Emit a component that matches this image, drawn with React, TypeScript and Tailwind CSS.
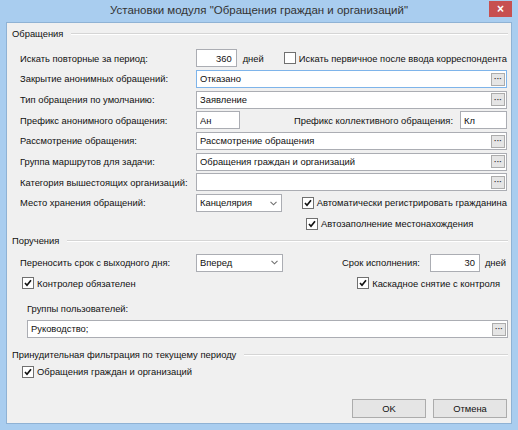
import React from "react";

const font = { fontFamily: '"Liberation Sans", Arial, sans-serif' };

function Dots() {
  return (
    <span className="flex h-[13px] w-[14px] items-center justify-center border border-[#acacac] bg-[#e5e5e5] text-[8px] font-bold leading-none text-[#333]">
      ···
    </span>
  );
}

function TextBox({
  value = "",
  className = "",
  right = false,
  dots = false,
  focused = false,
}: {
  value?: string;
  className?: string;
  right?: boolean;
  dots?: boolean;
  focused?: boolean;
}) {
  return (
    <div
      className={`flex h-[18px] items-center border bg-white pl-[3px] pr-[1px] ${
        focused ? "border-[#7eb4ea]" : "border-[#abadb3]"
      } ${className}`}
    >
      <span className={`flex-1 truncate ${right ? "pr-[3px] text-right" : ""}`}>{value}</span>
      {dots && <Dots />}
    </div>
  );
}

function Combo({ value, className = "" }: { value: string; className?: string }) {
  return (
    <div className={`flex h-[18px] items-center border border-[#abadb3] bg-white pl-[3px] pr-[4px] ${className}`}>
      <span className="flex-1">{value}</span>
      <svg width="7" height="5" viewBox="0 0 7 5">
        <path d="M0.5 0.8 L3.5 3.8 L6.5 0.8" fill="none" stroke="#707070" strokeWidth="1.1" />
      </svg>
    </div>
  );
}

function Check({ label, checked = false, className = "" }: { label: string; checked?: boolean; className?: string }) {
  return (
    <div className={`flex items-center gap-[3px] ${className}`}>
      <span className="flex h-[12px] w-[12px] items-center justify-center border border-[#707070] bg-white">
        {checked && (
          <svg width="8" height="8" viewBox="0 0 8 8">
            <path d="M1 4 L3 6.2 L7 1.3" fill="none" stroke="#111" strokeWidth="1.7" />
          </svg>
        )}
      </span>
      <span>{label}</span>
    </div>
  );
}

function Header({ title, className = "" }: { title: string; className?: string }) {
  return (
    <div className={`flex h-[16px] items-center gap-[8px] ${className}`}>
      <span>{title}</span>
      <div className="flex-1 border-t border-b border-t-[#d5d5d5] border-b-white" />
    </div>
  );
}

function Row({ label, children }: { label: string; children: React.ReactNode }) {
  return (
    <div className="flex h-[20.7px] items-center pl-[8px]">
      <span className="w-[176px] shrink-0 whitespace-nowrap">{label}</span>
      {children}
    </div>
  );
}

export default function App() {
  return (
    <div
      className="relative flex h-[430px] w-[518px] flex-col bg-[#a9cdef] text-[9.4px] leading-none text-[#111]"
      style={font}
    >
      <div className="flex h-[22px] items-center justify-center pb-[1px] text-[11.5px] text-[#333]">
        Установки модуля "Обращения граждан и организаций"
      </div>
      <div className="absolute right-[6px] top-[1px] flex h-[16px] w-[23px] items-center justify-center bg-[#c75050] text-[12px] font-bold text-white">
        ×
      </div>

      <div className="mx-[6px] flex h-[402px] flex-col border border-[#8fb2d4] bg-[#f0f0f0] pl-[5px] pr-[3px] whitespace-nowrap">
        <Header title="Обращения" className="mt-[3px]" />

        <div className="mt-[6px] flex flex-col pr-[1px]">
          <Row label="Искать повторные за период:">
            <TextBox value="360" right className="w-[50px]" />
            <span className="ml-[6px]">дней</span>
            <Check label="Искать первичное после ввода корреспондента" className="ml-[20px]" />
          </Row>
          <Row label="Закрытие анонимных обращений:">
            <TextBox value="Отказано" dots focused className="flex-1" />
          </Row>
          <Row label="Тип обращения по умолчанию:">
            <TextBox value="Заявление" dots className="flex-1" />
          </Row>
          <Row label="Префикс анонимного обращения:">
            <TextBox value="Ан" className="w-[44px]" />
            <span className="ml-auto mr-[7px]">Префикс коллективного обращения:</span>
            <TextBox value="Кл" className="w-[47px]" />
          </Row>
          <Row label="Рассмотрение обращения:">
            <TextBox value="Рассмотрение обращения" dots className="flex-1" />
          </Row>
          <Row label="Группа маршрутов для задачи:">
            <TextBox value="Обращения граждан и организаций" dots className="flex-1" />
          </Row>
          <Row label="Категория вышестоящих организаций:">
            <TextBox dots className="flex-1" />
          </Row>
          <Row label="Место хранения обращений:">
            <Combo value="Канцелярия" className="w-[96px]" />
            <Check label="Автоматически регистрировать гражданина" checked className="ml-[20px]" />
          </Row>
          <div className="flex h-[20.7px] items-center pl-[294px]">
            <Check label="Автозаполнение местонахождения" checked />
          </div>
        </div>

        <Header title="Поручения" className="mt-[-1px]" />

        <div className="mt-[3px] flex flex-col">
          <Row label="Переносить срок с выходного дня:">
            <Combo value="Вперед" className="w-[87px]" />
            <span className="ml-auto mr-[10px]">Срок исполнения:</span>
            <TextBox value="30" right className="w-[50px]" />
            <span className="ml-[5px] mr-[2px]">дней</span>
          </Row>
          <div className="flex h-[20.7px] items-center justify-between pl-[10px] pr-[8px]">
            <Check label="Контролер обязателен" checked />
            <Check label="Каскадное снятие с контроля" checked />
          </div>
          <div className="mt-[5px] flex h-[20px] items-center pl-[15px]">Группы пользователей:</div>
          <div className="flex h-[21px] items-center pl-[15px]">
            <TextBox value="Руководство;" dots className="flex-1" />
          </div>
        </div>

        <Header title="Принудительная фильтрация по текущему периоду" className="mt-[7px]" />
        <div className="flex h-[19px] items-center pl-[10px]">
          <Check label="Обращения граждан и организаций" checked />
        </div>

        <div className="mt-auto mb-[5px] flex justify-end gap-[7px] pr-[1px]">
          <button className="h-[19px] w-[74px] border border-[#acacac] bg-[#e5e5e5]">OK</button>
          <button className="h-[19px] w-[74px] border border-[#acacac] bg-[#e5e5e5]">Отмена</button>
        </div>
      </div>
    </div>
  );
}
